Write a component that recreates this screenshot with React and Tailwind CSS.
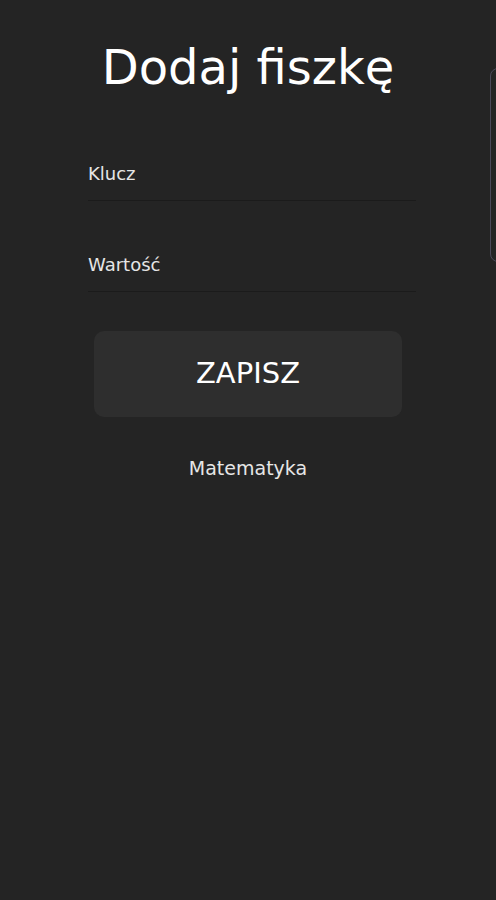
import React from 'react';

const Field = ({ label }) => (
  <div className="w-[328px] ml-[8px] border-b border-[#1b1b1b] pb-[13px]">
    <span className="text-[18px] text-[#e6e6e6] leading-none">{label}</span>
  </div>
);

export default function App() {
  return (
    <div
      className="relative w-[496px] h-[900px] bg-[#242424] overflow-hidden flex flex-col items-center"
      style={{ fontFamily: '"DejaVu Sans", sans-serif' }}
    >
      <h1 className="mt-[43px] text-[48px] leading-none text-white font-normal">Dodaj fiszkę</h1>

      <div className="mt-[72px] flex flex-col gap-[53px]">
        <Field label="Klucz" />
        <Field label="Wartość" />
      </div>

      <button className="mt-[39px] w-[308px] h-[86px] rounded-[10px] bg-[#2e2e2e] text-[29px] text-white">
        ZAPISZ
      </button>

      <p className="mt-[37px] text-[19px] text-[#e6e6e6]">Matematyka</p>

      <div className="absolute right-[-8px] top-[68px] w-[14px] h-[194px] rounded-l-[8px] border border-[#4b4959]" />
    </div>
  );
}
